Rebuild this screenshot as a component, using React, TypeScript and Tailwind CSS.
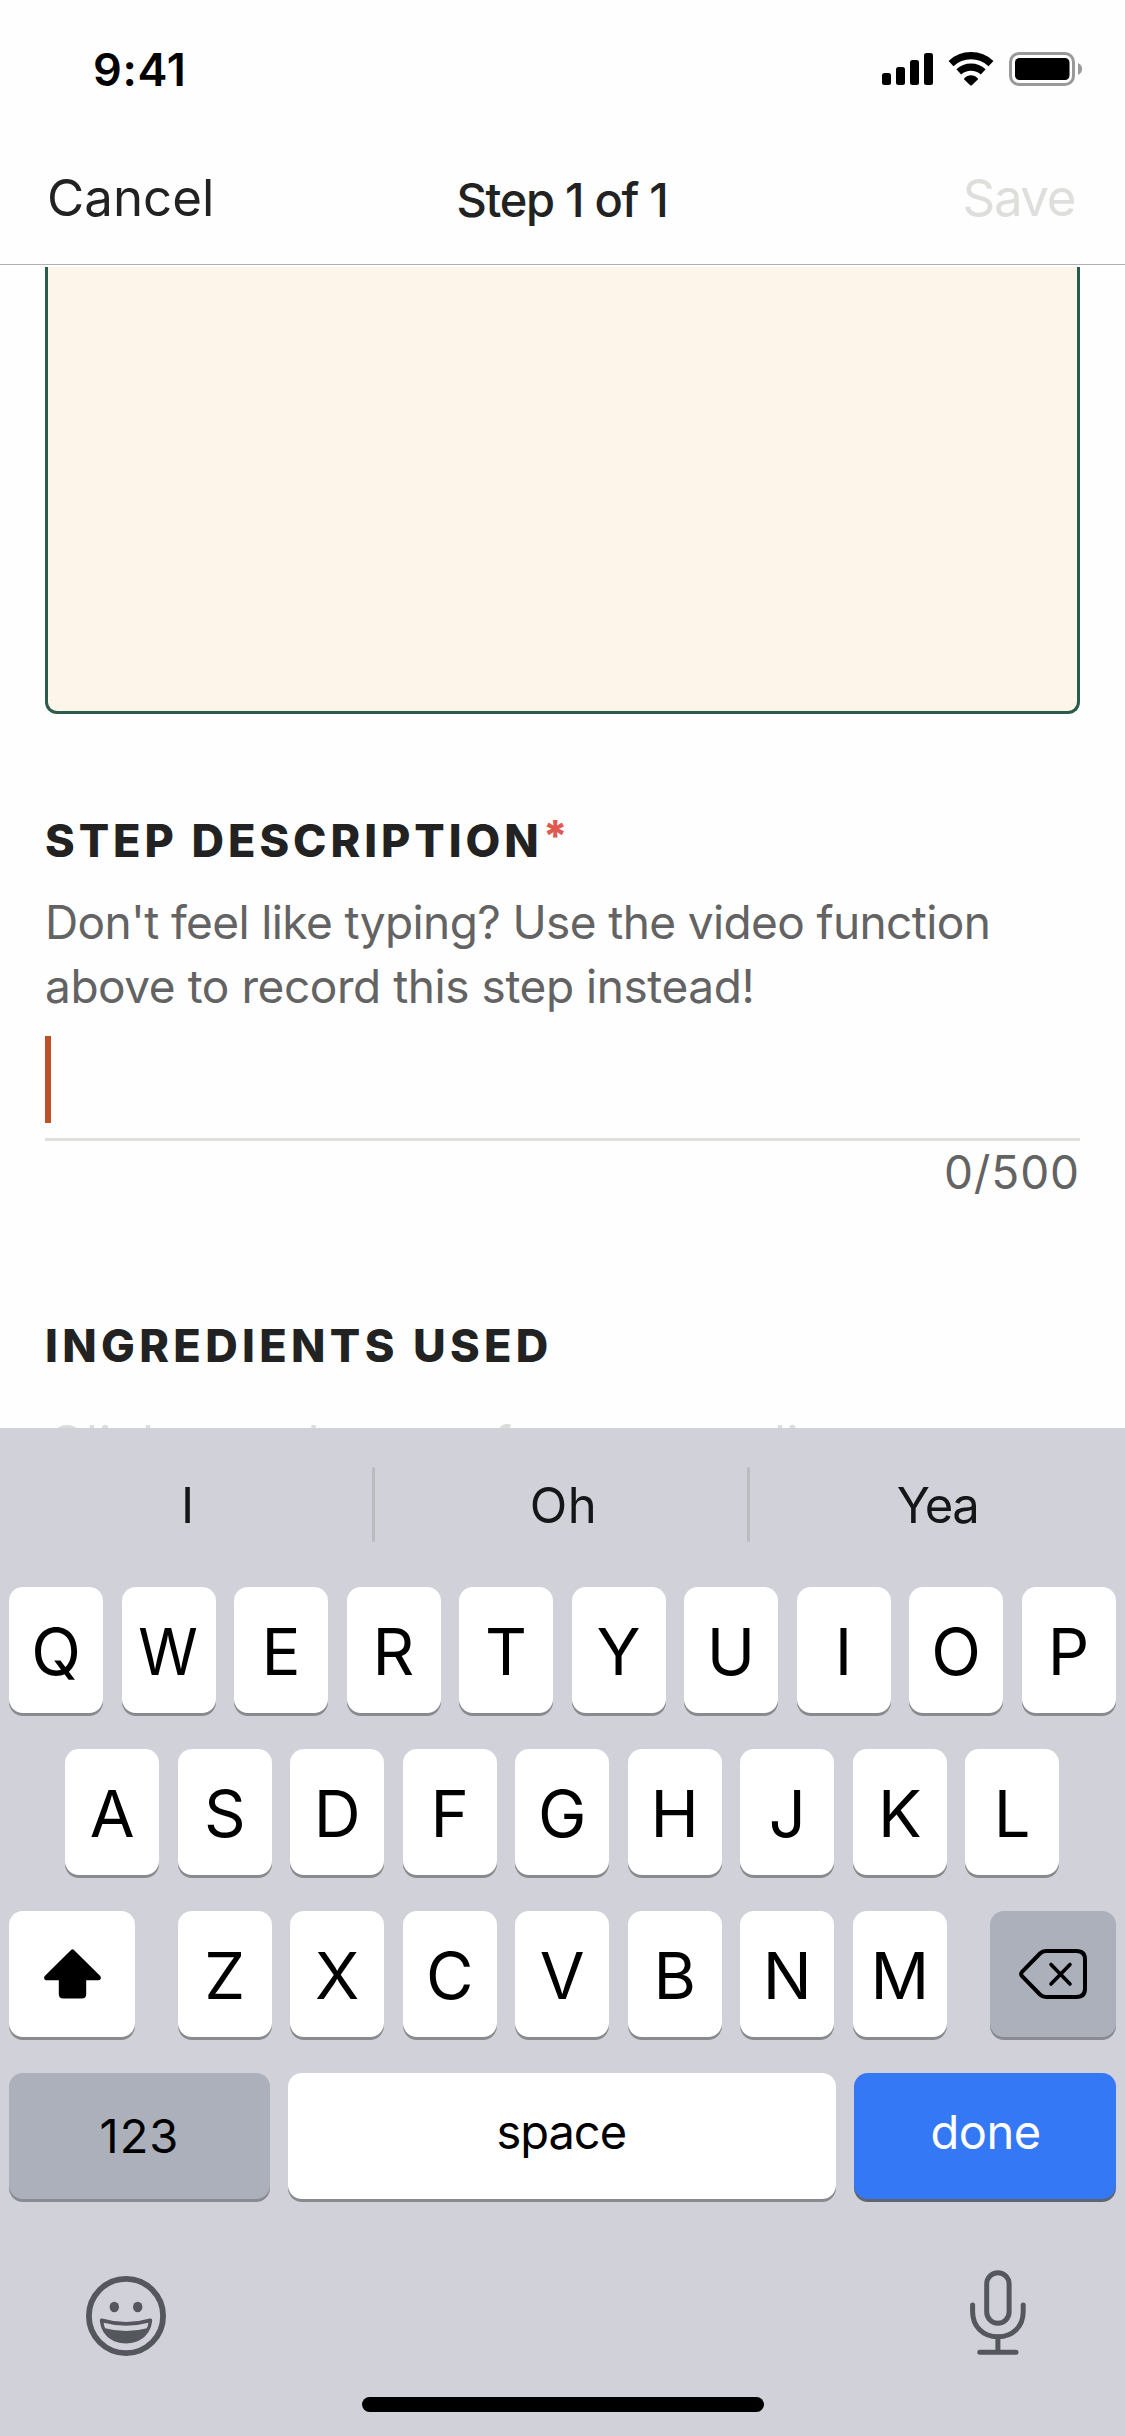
import type { ReactNode } from "react";

function StatusIcons() {
  return (
    <svg width="201" height="34" viewBox="0 0 201 34" fill="none">
      <g fill="#000">
        <rect x="0" y="21" width="9" height="12" rx="2.5" />
        <rect x="14" y="15" width="9" height="18" rx="2.5" />
        <rect x="28" y="8" width="9" height="25" rx="2.5" />
        <rect x="42" y="1" width="9" height="32" rx="2.5" />
        <path d="M82.2 26.4C86 22.2 92 22.2 95.8 26.4Q96.4 27 95.8 27.6L89.8 33.2Q89 33.9 88.2 33.2L82.2 27.6Q81.6 27 82.2 26.4Z" />
      </g>
      <path d="M69 11.6A29.3 29.3 0 0 1 109 11.6" stroke="#000" strokeWidth="7.2" />
      <path d="M76.8 19.9A18.2 18.2 0 0 1 101.2 19.9" stroke="#000" strokeWidth="7.2" />
      <rect x="128.5" y="1.5" width="63" height="31" rx="8.5" stroke="#999" strokeWidth="3" />
      <rect x="133" y="6" width="54.5" height="22" rx="4.5" fill="#000" />
      <path d="M196 11C201.5 13.5 201.5 20.5 196 23Z" fill="#999" />
    </svg>
  );
}

function ShiftIcon() {
  return (
    <svg width="57" height="50" viewBox="0 0 57 50">
      <path
        d="M27.3 .8Q28.5 -.4 29.7 .8L56 26.8Q57.4 28.5 56.6 30Q56 31.2 54.5 31.2H42.2V45Q42.2 49.5 37.7 49.5H19.3Q14.8 49.5 14.8 45V31.2H2.5Q1 31.2 .4 30Q-.4 28.5 1 26.8Z"
        fill="#000"
      />
    </svg>
  );
}

function BackspaceIcon() {
  return (
    <svg
      width="68"
      height="50"
      viewBox="0 0 68 50"
      fill="none"
      stroke="#000"
      strokeLinecap="round"
      strokeLinejoin="round"
    >
      <path
        strokeWidth="4"
        d="M27 2H57.5Q66 2 66 10.5V39.5Q66 48 57.5 48H27Q23.5 48 21 45.5L2.8 26.8Q1.5 25 2.8 23.2L21 4.5Q23.5 2 27 2Z"
      />
      <path strokeWidth="3.6" d="M32 15.5L51 35M51 15.5L32 35" />
    </svg>
  );
}

function EmojiIcon() {
  return (
    <svg width="80" height="80" viewBox="0 0 80 80">
      <circle cx="40" cy="40" r="37.1" fill="none" stroke="#54575c" strokeWidth="5.8" />
      <ellipse cx="28.3" cy="31" rx="4.7" ry="5.3" fill="#54575c" />
      <ellipse cx="51.7" cy="31" rx="4.7" ry="5.3" fill="#54575c" />
      <path
        d="M13.8 44.3Q13.8 42 16.2 42.5Q40 49.5 63.8 42.5Q66.2 42 66.2 44.3C65 58.5 54.5 67.5 40 67.5S15 58.5 13.8 44.3Z"
        fill="#54575c"
      />
      <path
        d="M17.6 46.8Q40 52.8 62.4 46.8Q62 50 60.8 52.2Q40 58 19.2 52.2Q18 50 17.6 46.8Z"
        fill="#d1d1da"
      />
    </svg>
  );
}

function MicIcon() {
  return (
    <svg
      width="56"
      height="85"
      viewBox="0 0 56 85"
      fill="none"
      stroke="#54575c"
      strokeWidth="5"
      strokeLinecap="round"
    >
      <rect x="16.7" y="2.8" width="22.4" height="50.5" rx="11.2" />
      <path d="M2.6 35V41.5C2.6 56.5 13 66.8 27.9 66.8S53.2 56.5 53.2 41.5V35" />
      <path d="M27.9 67V82M9.8 82.3H46" />
    </svg>
  );
}

const keyBase =
  "flex h-[126px] items-center justify-center rounded-[14px] leading-none text-black";

function LetterKey({ letter }: { letter: string }) {
  return (
    <div
      className={`${keyBase} w-[94px] shrink-0 bg-white pt-[3px] text-[65px] shadow-[0_3px_0_#898a8d]`}
    >
      <span className={letter === "W" ? "scale-x-[0.93]" : ""}>{letter}</span>
    </div>
  );
}

function KeyRow({ letters, children }: { letters: string; children?: ReactNode }) {
  return (
    <div className="flex justify-center gap-[18.5px]">
      {letters.split("").map((l) => (
        <LetterKey key={l} letter={l} />
      ))}
      {children}
    </div>
  );
}

function Keyboard() {
  return (
    <section className="flex h-[1008px] shrink-0 flex-col bg-[#d1d1da]">
      <div className="flex h-[153px] items-center text-[49px] text-[#141618]">
        <span className="w-[375px] pt-[2px] text-center">I</span>
        <span className="-ml-[3px] h-[75px] w-[3px] rounded-full bg-[#bbbbc0]" />
        <span className="w-[375px] pt-[2px] pl-[2px] text-center tracking-[0.5px]">Oh</span>
        <span className="-ml-[3px] h-[75px] w-[3px] rounded-full bg-[#bbbbc0]" />
        <span className="w-[375px] pt-[2px] text-center tracking-[-1.5px]">Yea</span>
      </div>

      <div className="mt-[6px] flex flex-col gap-9 pr-[9.5px] pl-[9px]">
        <KeyRow letters="QWERTYUIOP" />
        <KeyRow letters="ASDFGHJKL" />
        <div className="flex justify-between">
          <div className={`${keyBase} w-[126px] bg-white shadow-[0_3px_0_#898a8d]`}>
            <ShiftIcon />
          </div>
          <KeyRow letters="ZXCVBNM" />
          <div className={`${keyBase} w-[126px] bg-[#abb0bb] shadow-[0_3px_0_#898b91]`}>
            <BackspaceIcon />
          </div>
        </div>
        <div className="flex gap-[18px]">
          <div
            className={`${keyBase} w-[261px] bg-[#abb0bb] pb-[2px] text-[47px] tracking-[1px] shadow-[0_3px_0_#898b91]`}
          >
            123
          </div>
          <div
            className={`${keyBase} flex-1 bg-white pr-[1px] pb-[9px] text-[47px] tracking-[-1px] shadow-[0_3px_0_#898a8d]`}
          >
            space
          </div>
          <div
            className={`${keyBase} w-[262px] bg-[#3478f6] pb-[9px] pl-[2px] text-[47px] tracking-[-0.5px] shadow-[0_3px_0_#5f666f]`}
          >
            <span className="text-white">done</span>
          </div>
        </div>
      </div>

      <div className="mt-[71px] flex items-start justify-between pr-[99px] pl-[86px]">
        <div className="pt-[6px]">
          <EmojiIcon />
        </div>
        <MicIcon />
      </div>
      <div className="mt-auto mb-6 h-[15px] w-[402px] self-center rounded-full bg-black" />
    </section>
  );
}

export default function App() {
  return (
    <div className="flex h-[2436px] w-[1125px] flex-col overflow-hidden bg-[#fefefe] font-['Inter',sans-serif] text-[#222]">
      <div className="flex h-[138px] shrink-0 items-center justify-between pr-[42px] pl-[93px]">
        <span className="text-[45px] leading-none font-semibold tracking-[0.7px] text-black">
          9:41
        </span>
        <StatusIcons />
      </div>

      <header className="grid h-[127px] shrink-0 grid-cols-3 items-center border-b border-[#b0b0b0] px-[47px] pb-[7px]">
        <span className="text-[51px] leading-none">Cancel</span>
        <span className="pt-[3px] pr-[1px] text-center text-[47px] leading-none font-medium tracking-[-1.3px]">
          Step 1 of 1
        </span>
        <span className="pr-[3px] text-right text-[51px] leading-none tracking-[-1.4px] text-[#dededb]">
          Save
        </span>
      </header>

      <main className="flex min-h-0 flex-1 flex-col overflow-hidden px-[45px] pt-[2px]">
        <div className="h-[447px] shrink-0 rounded-b-[12px] border-x-[3px] border-b-[3px] border-[#2b5b4b] bg-[#fdf5ea]" />

        <h2 className="mt-[100px] flex h-[54px] shrink-0 text-[45px] leading-[54px] font-extrabold tracking-[3.95px]">
          STEP DESCRIPTION
          <span className="-mt-[6px] text-[43px] text-[#df5b52]">*</span>
        </h2>
        <p className="mt-[22px] text-[46px] leading-[64px] whitespace-nowrap text-[#636363]">
          <span className="tracking-[-0.62px]">
            Don't feel like typing? Use the video function
          </span>
          <br />
          <span className="tracking-[-0.45px]">above to record this step instead!</span>
        </p>

        <div className="mt-[18px] shrink-0 border-b-[3px] border-[#e0e0da] pb-[15px]">
          <div className="h-[87px] w-[6px] bg-[#bf4f2b]" />
        </div>
        <p className="mt-[3px] text-right text-[46px] leading-[56px] tracking-[0.9px] text-[#636363]">
          0/500
        </p>

        <h2 className="mt-[119px] text-[45px] leading-[54px] font-extrabold tracking-[4.35px]">
          INGREDIENTS USED
        </h2>
        <p className="mt-[41px] shrink-0 pl-[3px] text-[50px] leading-[60px] whitespace-nowrap text-[#dcdcd8]">
          <span className="tracking-[1.2px]">Click to se</span>
          <span className="mr-[12px] tracking-[-1.9px]">lect one</span>
          <span className="mr-[51px]">from your</span>
          <span>list</span>
        </p>
      </main>

      <Keyboard />
    </div>
  );
}
